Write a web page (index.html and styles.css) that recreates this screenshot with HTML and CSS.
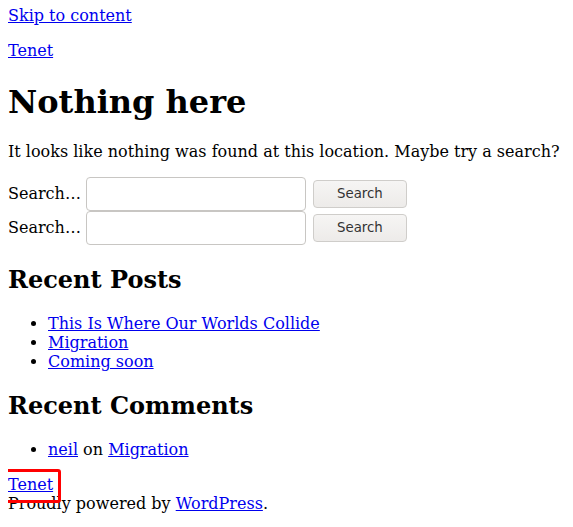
FILE: index.html
```html
<!DOCTYPE html>
<html lang="en">
<head>
<meta charset="utf-8">
<title>Page not found – Tenet</title>
<link rel="stylesheet" href="styles.css">
</head>
<body>
<a class="skip-link" href="#content">Skip to content</a>
<header class="site-header">
  <p class="site-title"><a href="#">Tenet</a></p>
</header>
<main id="content" class="site-main">
  <h1 class="page-title">Nothing here</h1>
  <p>It looks like nothing was found at this location. Maybe try a search?</p>
  <form class="search-form">
    <label class="search-label">Search…</label>
    <input class="search-field" type="search">
    <button class="search-submit" type="button">Search</button>
  </form>
  <form class="search-form">
    <label class="search-label">Search…</label>
    <input class="search-field" type="search">
    <button class="search-submit" type="button">Search</button>
  </form>
  <section class="widget">
    <h2 class="widget-title">Recent Posts</h2>
    <ul>
      <li><a href="#">This Is Where Our Worlds Collide</a></li>
      <li><a href="#">Migration</a></li>
      <li><a href="#">Coming soon</a></li>
    </ul>
  </section>
  <section class="widget">
    <h2 class="widget-title">Recent Comments</h2>
    <ul>
      <li><a href="#">neil</a> on <a href="#">Migration</a></li>
    </ul>
  </section>
</main>
<footer class="site-footer">
  <div class="footer-title"><a href="#">Tenet</a><div class="highlight-box"></div></div>
  <div class="site-info">Proudly powered by <a href="#">WordPress</a>.</div>
</footer>
</body>
</html>
```
FILE: styles.css
```css
body {
  margin: 6px 8px 8px;
  font-family: "DejaVu Serif", serif;
  font-size: 16px;
  color: #000;
  background: #fff;
}
a { color: #0000ee; }
.site-title { margin: 16px 0; }
.page-title { font-size: 32px; margin: 22.5px 0 21.44px; }
.search-form {
  display: flex;
  align-items: center;
  gap: 5px;
  margin: 0;
}
.search-label { white-space: nowrap; }
.search-field {
  width: 220px;
  height: 34px;
  box-sizing: border-box;
  border: 1px solid #c8c6c3;
  border-radius: 4px;
  background: #fff;
  margin: 0;
}
.search-submit {
  margin-left: 2px;
  width: 94px;
  height: 28px;
  font-family: "DejaVu Sans", sans-serif;
  font-size: 13.33px;
  color: #333;
  border: 1px solid #cfcdca;
  border-radius: 4px;
  background: linear-gradient(#f6f5f4, #edebe9);
}
.widget-title { font-size: 24px; margin: 19.92px 0; }
ul { margin: 16px 0; padding-left: 40px; }
.footer-title { margin-top: 16px; position: relative; }
.highlight-box {
  position: absolute;
  z-index: 1;
  left: -5px;
  top: -6px;
  width: 58px;
  height: 34px;
  box-sizing: border-box;
  border: 3px solid #ff0000;
  border-radius: 3px;
  pointer-events: none;
}
```
